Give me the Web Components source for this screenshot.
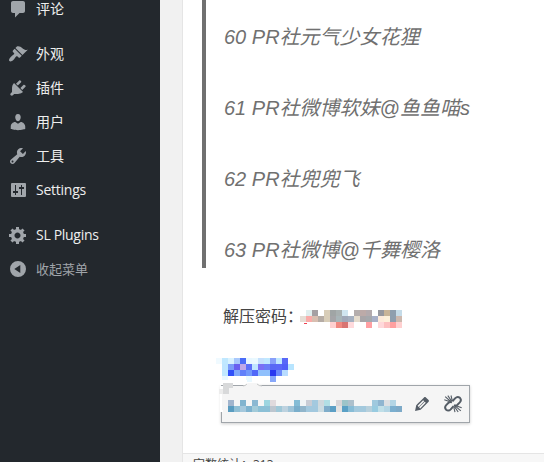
<!DOCTYPE html>
<html lang="zh-CN"><head><meta charset="utf-8"><title>Editor</title>
<style>html,body{margin:0;width:544px;height:462px;overflow:hidden;background:#f1f1f1}</style></head>
<body><admin-page></admin-page>
<script>
const ICONS={
comment:'<path d="M5 2h10c1.100 0 2 .9 2 2v8c0 1.100-.9 2-2 2h-3.500L7 18.500V14H5c-1.100 0-2-.9-2-2V4c0-1.100.9-2 2-2z"/>',
brush:'<path d="M14.48 11.06L7.41 3.99l1.500-1.500c.5-.56 2.300-.47 3.510.32 1.210.8 1.430 1.280 2.910 2.100 1.180.64 2.450 1.260 4.450.85zm-.71.71L6.700 4.700 4.930 6.470c-.39.39-.39 1.020 0 1.410l1.060 1.060c.39.39.39 1.030 0 1.420-.6.6-1.430 1.110-2.210 1.690-.35.26-.7.53-1.010.84C1.430 14.230.4 16.080 1.400 17.070c.99 1 2.840-.03 4.180-1.360.31-.31.58-.66.85-1.020.57-.78 1.080-1.610 1.690-2.210.39-.39 1.020-.39 1.410 0l1.060 1.060c.39.39 1.020.39 1.410 0z"/>',
plug:'<path d="M13.110 4.360L9.870 7.600 8 5.730l3.240-3.240c.35-.34 1.050-.2 1.560.32.52.51.66 1.210.31 1.550zm-8 1.770l.91-1.120 9.010 9.010-1.190.84c-.71.71-2.630 1.160-3.820 1.160H6.140L4.900 17.260c-.59.59-1.540.59-2.120 0-.59-.58-.59-1.530 0-2.120l1.240-1.240v-3.880c0-1.130.4-3.190 1.090-3.890zm7.260 3.970l3.240-3.240c.34-.35 1.040-.21 1.550.31.52.51.66 1.210.31 1.550l-3.240 3.250z"/>',
user:'<path d="M10 9.250c-2.270 0-2.730-3.440-2.730-3.440C7 4.020 7.820 2 9.970 2c2.160 0 2.980 2.020 2.710 3.810 0 0-.41 3.440-2.680 3.440zm0 2.570L12.720 10c2.390 0 4.520 2.330 4.520 4.530v2.490s-3.650 1.130-7.240 1.130c-3.650 0-7.240-1.130-7.240-1.130v-2.490c0-2.250 1.940-4.480 4.470-4.480z"/>',
wrench:'<path d="M16.680 9.770c-1.340 1.340-3.300 1.670-4.950.99l-5.410 6.520c-.99.99-2.590.99-3.580 0s-.99-2.590 0-3.570l6.520-5.420c-.68-1.650-.35-3.610.99-4.950 1.280-1.280 3.120-1.620 4.720-1.060l-2.890 2.890 2.820 2.820 2.860-2.870c.53 1.580.18 3.390-1.080 4.650zM3.810 16.210c.4.39 1.040.39 1.430 0 .4-.4.4-1.040 0-1.430-.39-.4-1.030-.4-1.430 0-.39.39-.39 1.030 0 1.430z"/>',
sliders:'<path fill-rule="evenodd" d="M4 3h13q1 0 1 1v12q0 1-1 1H4q-1 0-1-1V4q0-1 1-1zM7 5v6H5v2h2v2h1v-2h2v-2H8V5zM13 5v2h-2v2h2v6h1V9h2V7h-2V5z"/>',
gear:'<path d="M18 12h-2.180c-.17.7-.44 1.350-.81 1.930l1.540 1.540-2.100 2.100-1.540-1.540c-.58.36-1.230.63-1.910.79V19H8v-2.180c-.68-.16-1.330-.43-1.910-.79l-1.540 1.540-2.120-2.120 1.540-1.540c-.36-.58-.63-1.230-.79-1.910H1V9.030h2.170c.16-.7.44-1.350.8-1.940L2.430 5.550l2.100-2.100 1.540 1.540c.58-.37 1.240-.64 1.930-.81V2h3v2.180c.68.16 1.330.43 1.910.79l1.540-1.540 2.120 2.120-1.540 1.540c.36.59.64 1.240.8 1.940H18V12zm-8.500 1.500c1.660 0 3-1.340 3-3s-1.340-3-3-3-3 1.340-3 3 1.340 3 3 3z"/>',
collapse:'<path fill-rule="evenodd" d="M10 2a8 8 0 1 1 0 16a8 8 0 1 1 0-16zM12.300 6L6.300 10l6 4z"/>',
edit:'<path d="M13.890 3.390l2.710 2.720c.46.46.42 1.240.03 1.640l-8.010 8.020-5.560 1.160 1.160-5.580s7.600-7.630 7.990-8.030c.39-.39 1.220-.39 1.680.07zm-2.730 2.790l-5.590 5.610 1.110 1.110 5.540-5.650zm-2.970 8.230l5.580-5.600-1.070-1.080-5.590 5.600z"/>',
unlink:'<g fill="none" stroke="currentColor"><g stroke-width="2"><path d="M9.400 7.200l2.900-3.100q2.200-2.200 4.600-.3 2 2.300-.1 4.600l-2.300 2.300q-1.500 1.300-3.500.4"/><path d="M10.600 12.200l-2.900 3.200q-2.200 2.200-4.600.3-2-2.300.1-4.600L5.500 8.800Q7 7.500 9 8.400"/></g><path stroke-width="1.100" d="M2.200 2.700l6 5.300M4.800 1.600l3.900 5.600M8 1.500l1.200 4.800M1.300 5.800l5 1.800M11.800 11.600l6 5.300M11.300 12.400l3.900 5.600M10.800 13.300l1.200 4.800M13.700 12l5 1.800"/></g>'};
const T='transparent';
function element(name,html,ready){
  const t=document.createElement('template');t.innerHTML=html;
  customElements.define(name,class extends HTMLElement{
    connectedCallback(){if(this.shadowRoot)return;this.attachShadow({mode:'open'}).append(t.content.cloneNode(true));if(ready)ready(this,this.shadowRoot)}
  });
}
element('dash-icon','<style>:host{display:block;width:20px;height:20px;flex:none}svg{display:block;width:100%;height:100%;fill:currentColor}</style><svg viewBox="0 0 20 20"></svg>',
 (h,r)=>{r.querySelector('svg').innerHTML=ICONS[h.getAttribute('name')]||''});
element('menu-item','<style>:host{display:flex;align-items:center;height:34px;padding-left:8px;gap:8px;color:#eee;font:14px/20px "Open Sans","Noto Sans CJK SC",sans-serif;white-space:nowrap}:host([gap]){margin-top:11px}:host([dim]){color:#a0a5aa;font-size:13px}dash-icon{color:#a0a5aa}span{letter-spacing:var(--track,0)}</style><span><slot></slot></span>',
 (h,r)=>{const i=document.createElement('dash-icon');i.setAttribute('name',h.getAttribute('icon'));r.querySelector('span').before(i)});
/* Censor blocks: rows separated by "/", cells by spaces, "-" is an empty cell. */
element('pixel-mosaic','<style>:host{display:grid;grid-auto-rows:6px;flex:none}</style>',
 (h,r)=>{const rows=h.getAttribute('cells').trim().split('/').map(s=>s.trim().split(/\s+/));h.style.gridTemplateColumns='repeat('+rows[0].length+',6px)';
 for(const c of rows.flat()){const d=document.createElement('div');d.style.background=c==='-'?T:'#'+c;r.append(d)}});
element('admin-menu',`<style>:host{display:block;width:160px;height:462px;overflow:hidden;background:#23282d;flex:none}nav{margin-top:-8px}</style>
<nav><menu-item icon="comment">评论</menu-item><menu-item gap icon="brush">外观</menu-item><menu-item icon="plug">插件</menu-item><menu-item icon="user">用户</menu-item><menu-item icon="wrench">工具</menu-item><menu-item icon="sliders" style="--track:-.25px">Settings</menu-item><menu-item gap icon="gear" style="--track:-.3px">SL Plugins</menu-item><menu-item dim icon="collapse">收起菜单</menu-item></nav>`);
element('quote-block','<style>:host{display:flex;flex-direction:column;box-sizing:border-box;height:268px;margin-left:19px;border-left:4px solid #707070;padding:19px 0 0 18px;gap:35px;font:italic 20px/36px "Liberation Sans","Noto Sans CJK SC",sans-serif;color:#707070;white-space:nowrap}</style><slot></slot>');
element('link-toolbar',`<style>:host{position:absolute;left:38px;top:385px;width:249px;height:38px;box-sizing:border-box;border:1px solid #a0a5aa;background:#f5f5f5;box-shadow:0 1px 3px rgba(0,0,0,.2);display:flex;align-items:center;color:#555d66;padding-left:6px}
pixel-mosaic{margin-top:4px}dash-icon.e{margin-left:10px}dash-icon.u{margin-left:11px;margin-top:-1px}
svg{position:absolute;left:-5px;top:-6px}</style>
<pixel-mosaic cells="a2b5cd - 82b4cf - 8bb8d2 - 9dd5e0 e0dadd - - - 85bcd5 f0f4f6 c8ccd5 a3c9df cfd8dd b2dfe5 - d8d5d8 9dc4c9 adc0cc - - - a0c9de 8fb5d0 dcdfe3 b3d5e5 - / 5a9cc0 90bfd5 a5c8dc 7fb3cf a3cbd9 8cc0d6 8cc0d6 bdc6cf a0c8d8 bdd2df a0c4d8 7aaecb 90b5cb a2c8de a2c8de ccdce2 7fadca 5c9fc5 e5e3e2 5aa0c5 87bcd6 a3c9dd a3c9dd b7d0dc 98cbe0 c0dfe8 b3d5e4 7bafcf 7daac8"></pixel-mosaic>
<dash-icon class="e" name="edit"></dash-icon><dash-icon class="u" name="unlink"></dash-icon>
<svg width="70" height="40" viewBox="0 0 70 40"><path d="M3 0H30V5H3z" fill="#fff"/><path d="M3 6H6V32H3z" fill="#fff"/><path d="M5 9h2v21H5z" fill="#f5f5f5"/><path d="M26 6q3 0 5-3h9q2 3 5 3v1H26z" fill="#f5f5f5"/><path d="M26 6q2 0 4-2M45 6q-3 0-5-2" fill="none" stroke="#c8caca"/><path d="M6 3h10v5H12v6H6z" fill="#d8d9da"/><path d="M2 9h4v5H2z" fill="#ececec"/></svg>`);
element('post-editor',`<style>:host{position:relative;display:flex;flex-direction:column;box-sizing:border-box;width:362px;height:462px;border-left:1px solid #e5e5e5;background:#fff;overflow:hidden}
.pw{display:flex;height:24px;margin:35px 0 0 40px;color:#444;font:16px/24px "Noto Sans CJK SC",sans-serif;position:relative}.pw span{width:77px;white-space:nowrap}.pw pixel-mosaic{margin-top:7px}.pw i{position:absolute;left:81px;top:20px;width:3px;height:1px;background:#ef4050}
.link{margin:31px 0 0 33px;height:24px}
footer{position:absolute;left:0;right:0;bottom:0;height:8px;border-top:1px solid #e5e5e5;background:#f7f7f7;overflow:hidden}footer p{margin:2px 0 0 10px;font:12px/18px "Open Sans","Noto Sans CJK SC",sans-serif;color:#444;white-space:nowrap}</style>
<quote-block><div>60 PR社元气少女花狸</div><div>61 PR社微博软妹@鱼鱼喵s</div><div>62 PR社兜兜飞</div><div>63 PR社微博@千舞樱洛</div></quote-block>
<div class="pw"><span>解压密码：</span><pixel-mosaic cells="- e0eeee a5a0a3 - d8cdb8 a0a5a5 a8b0b0 d0e5f0 - b5aead bcaaa8 b3aaad - 97989f c8b498 8e9eae c5dbe8 / e6ddd5 faaaa8 d8beb0 b5aca5 d8cdb8 a5a5a8 a8b5b8 a0a8b8 a5b0c0 e5dccd a8a5a8 a5a8ac a8b0c8 fdeada fdf0da 8e9eae ccb8ae / - - - - - ffd0d0 f08880 d87472 ffdadc - - ffa0a3 - ffd8da fdc0c0 ffa0a0 ffd0d0"></pixel-mosaic><i></i></div>
<pixel-mosaic class="link" cells="f0faff c0e8ff daf3ff a8c8fc 4a6cf8 e8f7ff eaf9ff c5e0fd c0e8ff 88a0fa c0e8ff 5868f8 - / - bfe6ff 7c9cf8 6a60f0 bfa8e8 5c70f8 bfe6ff 7a70f5 6a7cf8 5868f5 5a68f8 5060f8 b8e5ff / - c0e8ff 3050f8 80a8fa 6080fa 7098fa 5068f8 90c0fc 90c0fc 2838f0 6a88fa b8dcff - / - eaf8ff - - - e8f8ff - - - 88a8fa - - -"></pixel-mosaic>
<link-toolbar></link-toolbar><footer><p>字数统计：313</p></footer>`);
element('admin-page','<style>:host{display:flex;width:544px;height:462px;gap:22px;background:#f1f1f1}</style><admin-menu></admin-menu><post-editor></post-editor>');
</script></body></html>
